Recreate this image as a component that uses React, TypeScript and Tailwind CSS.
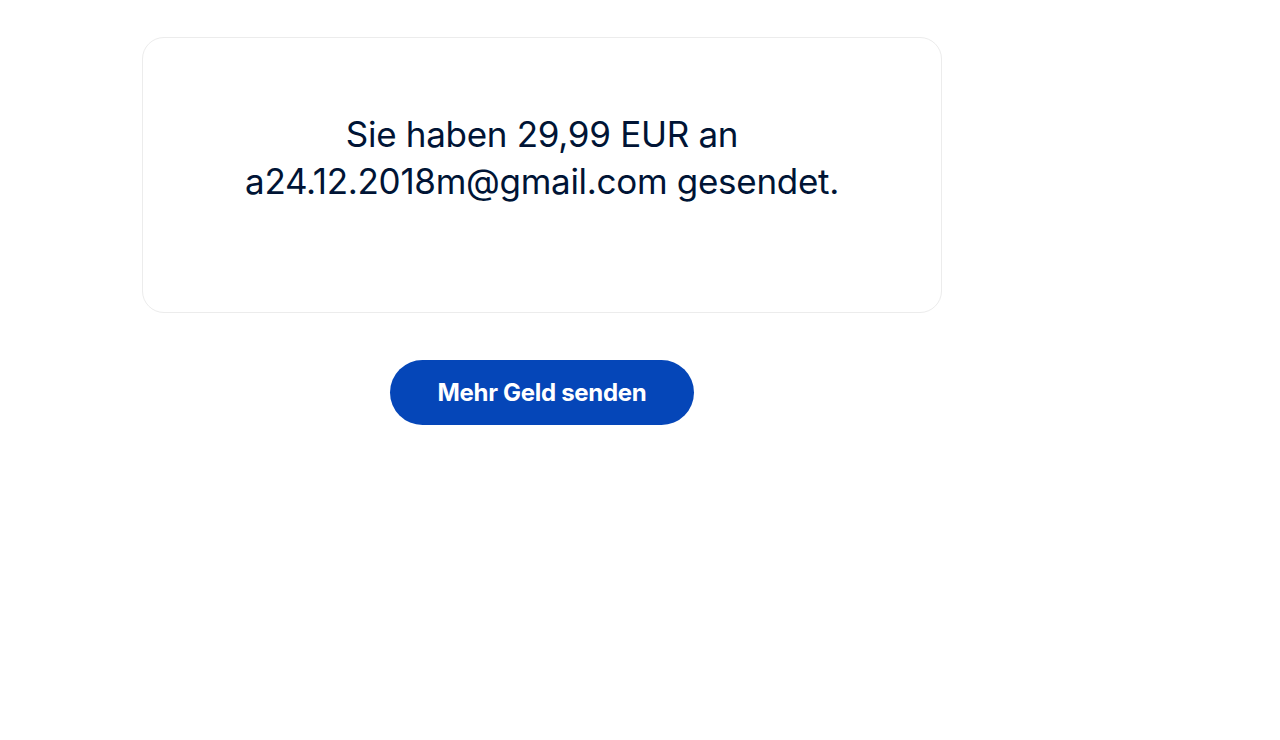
export default function App() {
  return (
    <div className="min-h-[740px] w-[1280px] bg-white" style={{ fontFamily: 'Inter, "Liberation Sans", sans-serif' }}>
      <div className="flex w-[800px] flex-col items-center pt-[37px] ml-[142px]">
        <div className="w-[800px] h-[276px] rounded-[22px] border border-[#ececec] bg-white pt-[73px] px-10">
          <p className="text-center text-[35px] leading-[47px] text-[#001435] tracking-[-0.3px]">
            Sie haben 29,99 EUR an
            <br />
            a24.12.2018m@gmail.com gesendet.
          </p>
        </div>
        <button className="mt-[47px] h-[65px] w-[304px] rounded-full bg-[#0546b8] text-[24px] font-bold text-white tracking-[-0.3px]">
          Mehr Geld senden
        </button>
      </div>
    </div>
  );
}
